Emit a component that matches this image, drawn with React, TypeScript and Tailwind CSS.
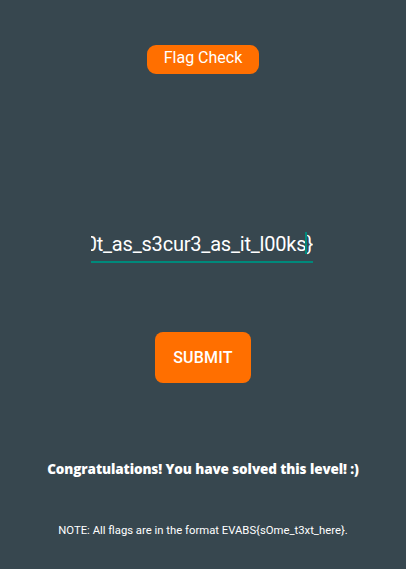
export default function App() {
  const flag = "EVABS{n0t_as_s3cur3_as_it_l00ks}";

  return (
    <div className="w-[406px] h-[569px] bg-[#37474f] flex flex-col items-center text-white font-['Roboto',sans-serif]">
      {/* Title chip */}
      <div className="mt-[45px] h-[29px] w-[112px] rounded-[9px] bg-[#ff6f00] flex items-center justify-center pb-[3px] text-[16px] leading-none">
        Flag Check
      </div>

      {/* Flag input */}
      <div className="mt-[154px] w-[222px] ml-[-2px] flex flex-col">
        <div className="relative h-[32px] overflow-hidden flex justify-end items-center">
          <span className="whitespace-nowrap text-[20px] leading-none tracking-[-0.2px]">{flag}</span>
          <span className="absolute right-[6px] top-[4px] w-[2px] h-[22px] bg-[#00897b]" />
        </div>
        <div className="h-[2px] bg-[#00897b] mt-[1px]" />
      </div>

      {/* Submit */}
      <button className="mt-[69px] w-[96px] h-[51px] rounded-[8px] bg-[#ff6f00] text-[16px] font-medium tracking-[0.2px] text-white">
        SUBMIT
      </button>

      <p className="mt-[76px] text-[13.5px] font-extrabold font-['Open_Sans',sans-serif] tracking-[-0.1px]">
        Congratulations! You have solved this level! :)
      </p>

      <p className="mt-[44px] text-[11.3px]">
        NOTE: All flags are in the format EVABS{"{"}sOme_t3xt_here{"}"}.
      </p>
    </div>
  );
}
